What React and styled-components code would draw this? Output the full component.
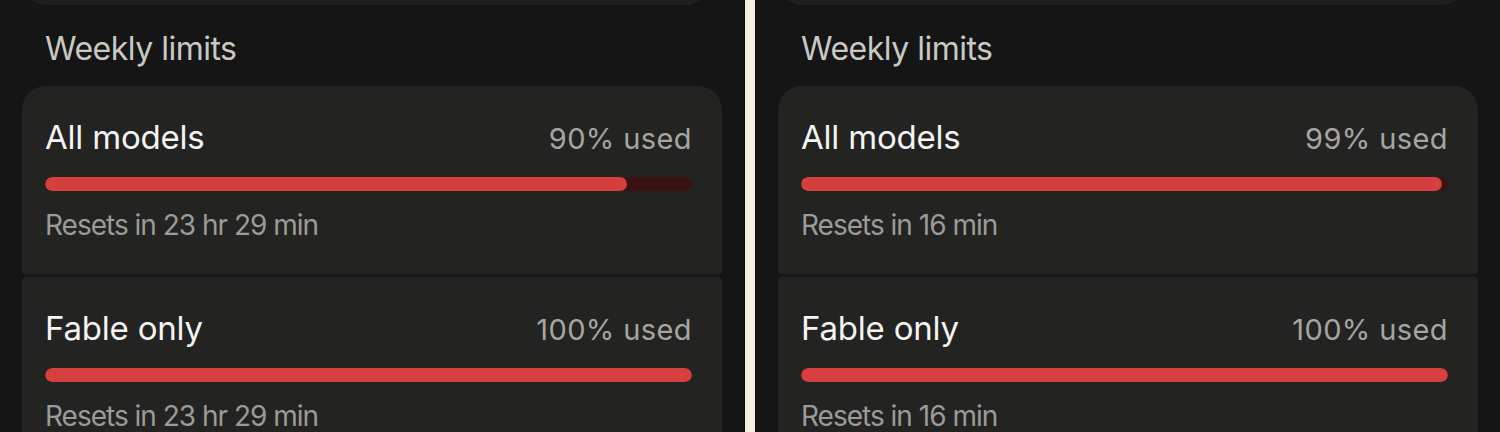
import React from "react";
import styled, { createGlobalStyle } from "styled-components";

const Global = createGlobalStyle`
  html, body { margin: 0; padding: 0; background: #f6eee3; }
  body { font-family: Inter, "Noto Sans", sans-serif; -webkit-font-smoothing: antialiased; }
`;

const Screen = styled.div`
  display: grid;
  grid-template-columns: 745px 745px;
  column-gap: 10px;
  width: 1500px;
  height: 432px;
  overflow: hidden;
  background: #f6eee3;
`;

const Panel = styled.div`
  background: #151515;
  padding: 0 22px;
  overflow: hidden;
  display: flex;
  flex-direction: column;
  border-left: ${(p) => (p.$right ? "1px solid #0c0c0c" : "none")};
  border-right: ${(p) => (p.$right ? "none" : "1px solid #0c0c0c")};
`;

const TopCard = styled.div`
  height: 60px;
  margin-top: -55px;
  margin-right: 12px;
  background: #1f1f1f;
  border-radius: 24px;
  flex-shrink: 0;
`;

const SectionTitle = styled.div`
  margin: 24px 0 17px 23px;
  font-size: 32px;
  line-height: 40px;
  color: #c9c9c4;
  letter-spacing: -0.5px;
`;

const Card = styled.div`
  background: #232322;
  border-radius: ${(p) => (p.$first ? "24px 24px 4px 4px" : "4px 4px 4px 4px")};
  padding: 31px 30px 31px 23px;
  margin-bottom: 3px;
  flex-shrink: 0;
`;

const Row = styled.div`
  display: flex;
  justify-content: space-between;
  align-items: baseline;
`;

const Label = styled.div`
  font-size: 33px;
  line-height: 40px;
  color: #f4f4f2;
  letter-spacing: -0.2px;
`;

const Used = styled.div`
  font-size: 29px;
  line-height: 40px;
  color: #a6a6a1;
  letter-spacing: 0.4px;
`;

const Track = styled.div`
  margin-top: 18px;
  height: 14px;
  border-radius: 7px;
  background: #3b1212;
  overflow: hidden;
`;

const Fill = styled.div`
  height: 100%;
  border-radius: 7px;
  background: #d53f3f;
`;

const Reset = styled.div`
  margin-top: 16px;
  font-size: 28px;
  line-height: 36px;
  color: #9b9b97;
  letter-spacing: -1px;
`;

function Limit({ label, pct, reset, first }) {
  return (
    <Card $first={first}>
      <Row>
        <Label>{label}</Label>
        <Used>{pct}% used</Used>
      </Row>
      <Track>
        <Fill style={{ width: `${pct}%` }} />
      </Track>
      <Reset>{reset}</Reset>
    </Card>
  );
}

function LimitsPanel({ right, models, reset }) {
  return (
    <Panel $right={right}>
      <TopCard />
      <SectionTitle>Weekly limits</SectionTitle>
      <Limit first label="All models" pct={models} reset={reset} />
      <Limit label="Fable only" pct={100} reset={reset} />
    </Panel>
  );
}

export default function App() {
  return (
    <>
      <Global />
      <Screen>
        <LimitsPanel models={90} reset="Resets in 23 hr 29 min" />
        <LimitsPanel right models={99} reset="Resets in 16 min" />
      </Screen>
    </>
  );
}
